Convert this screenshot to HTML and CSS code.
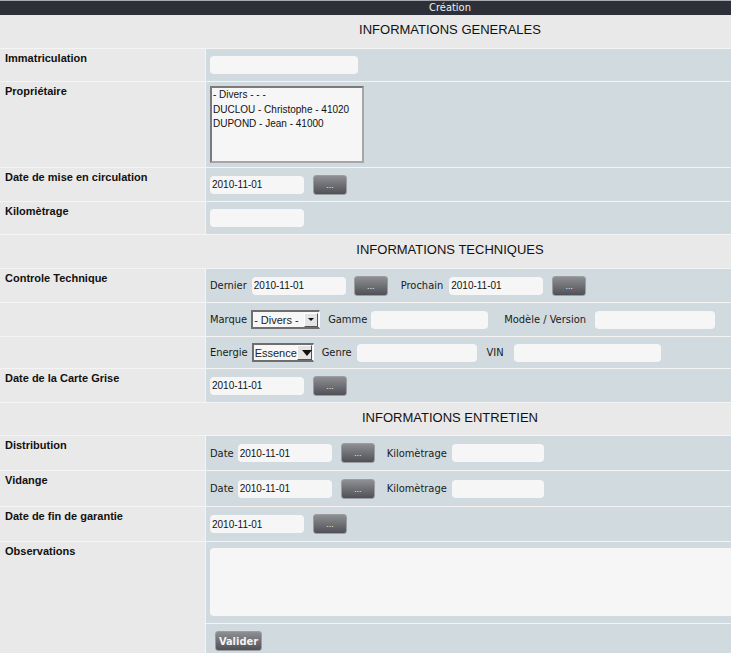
FILE: index.html
```html
<!DOCTYPE html>
<html lang="fr">
<head>
<meta charset="utf-8">
<title>Création</title>
<link rel="stylesheet" href="styles.css">
</head>
<body>
<div class="page">
  <div class="titlebar">Création</div>
  <div class="form">
    <div class="section">INFORMATIONS GENERALES</div>

    <div class="lab">Immatriculation</div>
    <div class="val h32"><input class="txt w148" type="text" value=""></div>

    <div class="lab">Propriétaire</div>
    <div class="val val-list">
      <div class="listbox">
        <div class="opt">- Divers - - -</div>
        <div class="opt">DUCLOU - Christophe - 41020</div>
        <div class="opt">DUPOND - Jean - 41000</div>
      </div>
    </div>

    <div class="lab">Date de mise en circulation</div>
    <div class="val"><input class="txt w94" type="text" value="2010-11-01"><button class="btn">...</button></div>

    <div class="lab">Kilomètrage</div>
    <div class="val h32"><input class="txt w94" type="text" value=""></div>

    <div class="section">INFORMATIONS TECHNIQUES</div>

    <div class="lab">Controle Technique</div>
    <div class="val">
      <span class="fl">Dernier</span><input class="txt w94" type="text" value="2010-11-01"><button class="btn btn8">...</button>
      <span class="fl ml13 mr6">Prochain</span><input class="txt w94" type="text" value="2010-11-01"><button class="btn">...</button>
    </div>

    <div class="lab"></div>
    <div class="val">
      <span class="fl mr4">Marque</span>
      <div class="sel w69"><span class="sel-text">- Divers -</span><span class="sel-arrow"></span></div>
      <span class="fl ml8 mr4">Gamme</span><input class="txt w117" type="text" value="">
      <span class="fl ml16 mr9">Modèle / Version</span><input class="txt w120" type="text" value="">
    </div>

    <div class="lab"></div>
    <div class="val h31">
      <span class="fl mr4">Energie</span>
      <div class="sel sel-big w62"><span class="sel-text">Essence</span><span class="sel-arrow"></span></div>
      <span class="fl ml8">Genre</span><input class="txt w120" type="text" value="">
      <span class="fl ml10 mr10">VIN</span><input class="txt w147" type="text" value="">
    </div>

    <div class="lab">Date de la Carte Grise</div>
    <div class="val"><input class="txt w94" type="text" value="2010-11-01"><button class="btn">...</button></div>

    <div class="section h32">INFORMATIONS ENTRETIEN</div>

    <div class="lab">Distribution</div>
    <div class="val h34">
      <span class="fl mr4">Date</span><input class="txt w94" type="text" value="2010-11-01"><button class="btn">...</button>
      <span class="fl ml12">Kilomètrage</span><input class="txt w92" type="text" value="">
    </div>

    <div class="lab">Vidange</div>
    <div class="val h35">
      <span class="fl mr4">Date</span><input class="txt w94" type="text" value="2010-11-01"><button class="btn">...</button>
      <span class="fl ml12">Kilomètrage</span><input class="txt w92" type="text" value="">
    </div>

    <div class="lab">Date de fin de garantie</div>
    <div class="val h34"><input class="txt w94" type="text" value="2010-11-01"><button class="btn">...</button></div>

    <div class="lab lab-obs">Observations</div>
    <div class="val val-area"><textarea class="area"></textarea></div>
    <div class="val val-submit"><button class="submit">Valider</button></div>
  </div>
</div>
</body>
</html>
```

FILE: styles.css
```css
html, body {
  margin: 0;
  padding: 0;
  overflow: hidden;
  background: #f2f2f2;
}

.page {
  width: 900px;
  font-family: "DejaVu Sans Condensed", "DejaVu Sans", sans-serif;
  font-size: 11px;
  color: #1a1a1a;
}

.titlebar {
  height: 14px;
  border-top: 1px solid #a9abb0;
  background: #2d3038;
  color: #f2f2f2;
  text-align: center;
  font-size: 11px;
  line-height: 13px;
}

.form {
  display: grid;
  grid-template-columns: 205px 694px;
  column-gap: 1px;
  row-gap: 1px;
  background: #f4f4f4;
}

.section {
  grid-column: 1 / -1;
  box-sizing: border-box;
  height: 33px;
  padding-bottom: 4px;
  background: #e9e9e9;
  display: flex;
  align-items: center;
  justify-content: center;
  font-family: "Liberation Sans", Arial, sans-serif;
  font-size: 13px;
  color: #111;
}

.section.h32 { height: 32px; min-height: 32px; }

.lab {
  background: #e9e9e9;
  padding: 3px 0 0 5px;
  font-family: "Liberation Sans", Arial, sans-serif;
  font-weight: bold;
  font-size: 11px;
  color: #111;
}

.lab-obs {
  grid-row: span 2;
}

.val {
  background: #d1dade;
  min-height: 33px;
  box-sizing: border-box;
  padding-left: 4px;
  display: flex;
  align-items: center;
}

.h31 { min-height: 31px; }
.h32 { min-height: 32px; height: 32px; }
.h34 { min-height: 34px; }
.h35 { min-height: 35px; }

.val-list {
  padding-top: 4px;
  padding-bottom: 4px;
  align-items: flex-start;
}

.val-area {
  padding-top: 6px;
  padding-bottom: 7px;
  align-items: flex-start;
}

.val-submit {
  padding-left: 9px;
  padding-top: 7px;
  align-items: flex-start;
  min-height: 30px;
}

.fl {
  margin-right: 5px;
  color: #1a1a1a;
}
.ml8 { margin-left: 8px; }
.ml10 { margin-left: 10px; }
.ml12 { margin-left: 12px; }
.ml13 { margin-left: 13px; }
.ml16 { margin-left: 16px; }
.mr4 { margin-right: 4px; }
.mr6 { margin-right: 6px; }
.mr9 { margin-right: 9px; }
.mr10 { margin-right: 10px; }

.txt {
  box-sizing: border-box;
  height: 18px;
  border: none;
  border-radius: 4px;
  background: #f6f6f6;
  padding: 0 2px;
  margin: 0;
  font-family: "Liberation Sans", Arial, sans-serif;
  font-size: 10px;
  color: #111;
  outline: none;
}

.w92 { width: 92px; }
.w94 { width: 94px; }
.w117 { width: 117px; }
.w120 { width: 120px; }
.w147 { width: 147px; }
.w148 { width: 148px; }
.w62 { width: 62px; }
.w69 { width: 69px; }

.btn {
  box-sizing: border-box;
  width: 34px;
  height: 20px;
  margin: 0 0 0 9px;
  padding: 0;
  border: 1px solid #9c9da0;
  border-radius: 3px;
  background: linear-gradient(#8e8f93, #505156);
  color: #ededed;
  font-family: "Liberation Sans", Arial, sans-serif;
  font-size: 9px;
  line-height: 16px;
}

.btn8 { margin-left: 8px; }

.listbox {
  box-sizing: border-box;
  width: 154px;
  height: 77px;
  border-top: 2px solid #7a7a7a;
  border-left: 2px solid #7a7a7a;
  border-right: 2px solid #a6a6a6;
  border-bottom: 2px solid #a6a6a6;
  background: #f6f6f6;
  padding: 0 0 0 1px;
  font-family: "Liberation Sans", Arial, sans-serif;
  font-size: 10px;
  color: #111;
}

.opt {
  height: 14.5px;
  line-height: 14px;
}

.sel {
  box-sizing: border-box;
  height: 19px;
  display: flex;
  align-items: center;
  justify-content: space-between;
  background: #f7f7f7;
  border-top: 2px solid #6e6e6e;
  border-left: 2px solid #6e6e6e;
  border-bottom: 2px solid #6e6e6e;
  border-right: 1px solid #ffffff;
  padding-right: 1px;
  font-family: "Liberation Sans", Arial, sans-serif;
  font-size: 11px;
  color: #222;
}

.sel-text {
  padding-left: 1px;
  white-space: nowrap;
}

.sel-arrow {
  position: relative;
  box-sizing: border-box;
  width: 14px;
  height: 14px;
  background: #e4e4e4;
  border-top: 1px solid #ffffff;
  border-left: 1px solid #ffffff;
  border-right: 1px solid #555;
  border-bottom: 1px solid #555;
}

.sel-arrow::after {
  content: "";
  position: absolute;
  left: 3px;
  top: 4px;
  border-left: 3px solid transparent;
  border-right: 3px solid transparent;
  border-top: 3px solid #111;
}

.sel-big .sel-arrow {
  width: 20px;
  height: 15px;
}
.sel-big .sel-arrow::after {
  left: 4px;
  top: 4px;
  border-left: 5px solid transparent;
  border-right: 5px solid transparent;
  border-top: 6px solid #111;
}

.area {
  box-sizing: border-box;
  width: 680px;
  height: 68px;
  border: none;
  border-radius: 4px;
  background: #f6f6f6;
  margin: 0;
  resize: none;
  outline: none;
}

.submit {
  box-sizing: border-box;
  width: 47px;
  height: 20px;
  margin: 0;
  padding: 0;
  border: 1px solid #9c9da0;
  border-radius: 3px;
  background: linear-gradient(#8e8f93, #505156);
  color: #f2f2f2;
  font-family: "DejaVu Sans Condensed", "DejaVu Sans", sans-serif;
  font-weight: bold;
  font-size: 11px;
}
```
